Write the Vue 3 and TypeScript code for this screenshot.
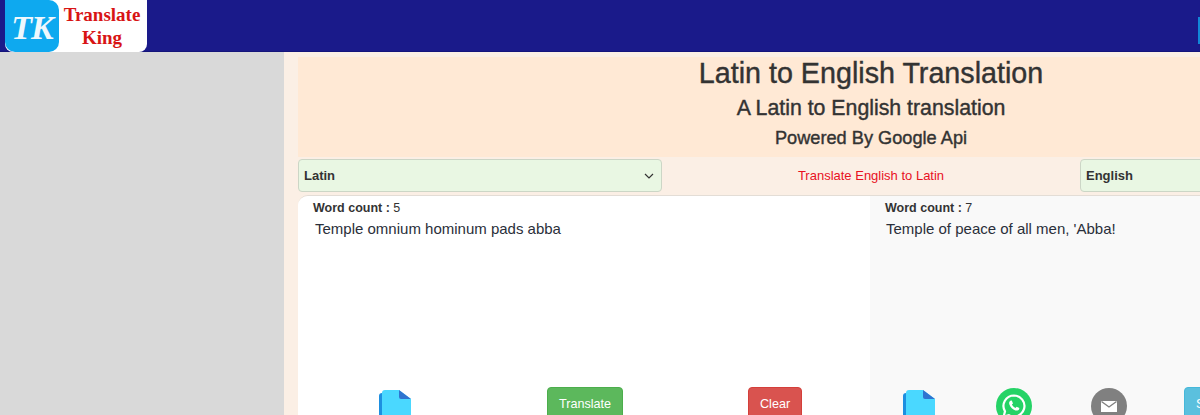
<script setup lang="ts">
interface Pane { count: number; text: string }
const source: Pane = { count: 5, text: 'Temple omnium hominum pads abba' }
const target: Pane = { count: 7, text: "Temple of peace of all men, 'Abba!" }
</script>

<template>
  <div class="page">
    <header class="topbar">
      <div class="logo">
        <div class="tk">TK</div>
        <div class="brand">Translate<br />King</div>
      </div>
      <div class="edge"></div>
    </header>
    <div class="body">
      <aside class="side"></aside>
      <main class="main">
        <section class="hero">
          <h1>Latin to English Translation</h1>
          <h2>A Latin to English translation</h2>
          <h3>Powered By Google Api</h3>
        </section>
        <div class="langs">
          <div class="select left">
            <span>Latin</span>
            <svg width="10" height="6" viewBox="0 0 10 6"><path d="M1 1l4 4 4-4" fill="none" stroke="#333" stroke-width="1.2" /></svg>
          </div>
          <a class="swap">Translate English to Latin</a>
          <div class="select right"><span>English</span></div>
        </div>
        <div class="panes">
          <div class="pane src">
            <div class="count"><b>Word count :</b> {{ source.count }}</div>
            <div class="text">{{ source.text }}</div>
            <div class="actions a-left">
              <svg class="file" width="32" height="32" viewBox="0 0 32 32">
                <path d="M3 3h20v29H0V6a3 3 0 0 1 3-3z" fill="#1d8fe0" />
                <path d="M6 0h14l12 9v23H3V3a3 3 0 0 1 3-3z" fill="#4ad8ff" />
                <path d="M20 0l12 9H22a2 2 0 0 1-2-2z" fill="#2f74d0" />
              </svg>
              <button class="btn green">Translate</button>
              <button class="btn red">Clear</button>
            </div>
          </div>
          <div class="pane dst">
            <div class="count"><b>Word count :</b> {{ target.count }}</div>
            <div class="text">{{ target.text }}</div>
            <div class="actions a-right">
              <svg class="file" width="32" height="32" viewBox="0 0 32 32">
                <path d="M3 3h20v29H0V6a3 3 0 0 1 3-3z" fill="#1d8fe0" />
                <path d="M6 0h14l12 9v23H3V3a3 3 0 0 1 3-3z" fill="#4ad8ff" />
                <path d="M20 0l12 9H22a2 2 0 0 1-2-2z" fill="#2f74d0" />
              </svg>
              <svg class="round" width="36" height="36" viewBox="0 0 36 36">
                <circle cx="18" cy="18" r="18" fill="#25d366" />
                <path d="M18 7.5a10.5 10.5 0 0 0-9 15.9L7.6 28.6l5.3-1.4A10.5 10.5 0 1 0 18 7.5z" fill="none" stroke="#fff" stroke-width="2.2" />
                <path d="M14.3 12.8c-.9.6-1.5 1.9-.9 3.6 1 2.7 3.3 5 6 6 1.6.5 3 0 3.6-1l.4-1.3-2.8-1.4-1.2 1.3c-1.5-.6-2.8-1.9-3.5-3.4l1.1-1.2-1.2-2.8z" fill="#fff" />
              </svg>
              <svg class="round" width="36" height="36" viewBox="0 0 36 36">
                <circle cx="18" cy="18" r="18" fill="#808080" />
                <rect x="10" y="13" width="16" height="11" fill="#fff" />
                <path d="M10.5 13.5 18 19l7.5-5.5" fill="none" stroke="#808080" stroke-width="1.4" />
              </svg>
              <button class="btn blue">Share</button>
            </div>
          </div>
        </div>
      </main>
    </div>
  </div>
</template>

<style>
html, body { margin: 0; overflow: hidden; background: #fff; }
</style>

<style scoped>
.page {
  width: 1200px;
  height: 415px;
  overflow: hidden;
  font-family: "Liberation Sans", Arial, sans-serif;
  color: #333;
}
.topbar {
  height: 51px;
  background: #1a1a8a;
  display: flex;
  justify-content: space-between;
  padding-left: 5px;
  border-bottom: 1px solid #14147a;
}
.logo {
  width: 142px;
  height: 52px;
  background: #fff;
  border-radius: 0 0 8px 8px;
  display: flex;
  position: relative;
  z-index: 1;
}
.tk {
  width: 54px;
  height: 52px;
  background: #0ea9ef;
  border-radius: 0 10px 10px 10px;
  color: #eef8fd;
  font: italic bold 34px/55px "Liberation Serif", serif;
  text-align: center;
  letter-spacing: -1px;
}
.brand {
  flex: 1;
  color: #d81414;
  font: bold 19px/23px "Liberation Serif", serif;
  text-align: center;
  padding: 3px 2px 0 0;
}
.edge {
  width: 2px;
  height: 27px;
  margin-top: 17px;
  background: #1187d8;
  flex: none;
}
.body {
  display: flex;
  height: 363px;
}
.side {
  width: 284px;
  flex: none;
  background: #d9d9d9;
}
.main {
  flex: none;
  width: 1000px;
  background: #fbefe5;
  padding: 5px 0 0 14px;
}
.hero {
  width: 1146px;
  height: 100px;
  background: #ffe9d5;
  text-align: center;
  color: #333;
}
h1, h2, h3 { margin: 0; font-weight: 400; -webkit-text-stroke: 0.4px #333; }
h1 { font-size: 28.7px; line-height: 32px; }
h2 { font-size: 21.3px; line-height: 24px; padding-top: 7px; }
h3 { font-size: 18.2px; line-height: 22px; padding-top: 7px; }
.langs {
  width: 1146px;
  height: 34px;
  margin-top: 1px;
  display: flex;
  align-items: center;
}
.select {
  height: 33px;
  box-sizing: border-box;
  background: #e9f7e3;
  border: 1px solid #ccd6c6;
  border-radius: 4px;
  display: flex;
  align-items: center;
  justify-content: space-between;
  padding: 1px 7px 0 5px;
  font-size: 13px;
  font-weight: 700;
  flex: none;
}
.select.left { width: 364px; }
.select.right { width: 364px; }
.swap {
  width: 418px;
  flex: none;
  text-align: center;
  color: #e8111f;
  font-size: 13px;
}
.panes {
  width: 1146px;
  height: 240px;
  margin-top: 3px;
  display: flex;
  border-radius: 10px 0 0 0;
  overflow: hidden;
  border-top: 1px solid #e3ddd6;
  box-sizing: border-box;
}
.pane {
  width: 572px;
  flex: none;
  position: relative;
  box-sizing: border-box;
  padding-top: 4px;
  font-size: 14px;
}
.src { background: #fff; padding-left: 15px; }
.dst { background: #f9f9f9; width: 574px; padding-left: 15px; }
.count { font-size: 12.5px; line-height: 16px; color: #333; }
.count b { font-weight: 700; }
.text {
  margin-top: 3px;
  padding-left: 2px;
  font-size: 15px;
  line-height: 20px;
  color: #2a2f3a;
}
.dst .text { padding-left: 1px; }
.actions {
  position: absolute;
  left: 0;
  top: 190px;
  width: 100%;
  height: 60px;
}
.actions > * { position: absolute; top: 0; }
.a-left .file { left: 81px; top: 4px; }
.a-left .green { left: 249px; top: 1px; }
.a-left .red { left: 450px; top: 1px; }
.a-right .file { left: 33px; top: 4px; }
.a-right .round:nth-of-type(2) { left: 126px; top: 2px; }
.a-right .round:nth-of-type(3) { left: 221px; top: 2px; }
.a-right .blue { left: 314px; top: 1px; }
.btn {
  height: 34px;
  border: 1px solid transparent;
  border-radius: 4px;
  color: #fff;
  font: 12.6px "Liberation Sans", Arial, sans-serif;
  padding: 0 11px;
}
.green { background: #5cb85c; border-color: #4cae4c; width: 76px; }
.red { background: #d9534f; border-color: #d43f3a; width: 54px; }
.blue { background: #5bc0de; border-color: #46b8da; }
</style>
